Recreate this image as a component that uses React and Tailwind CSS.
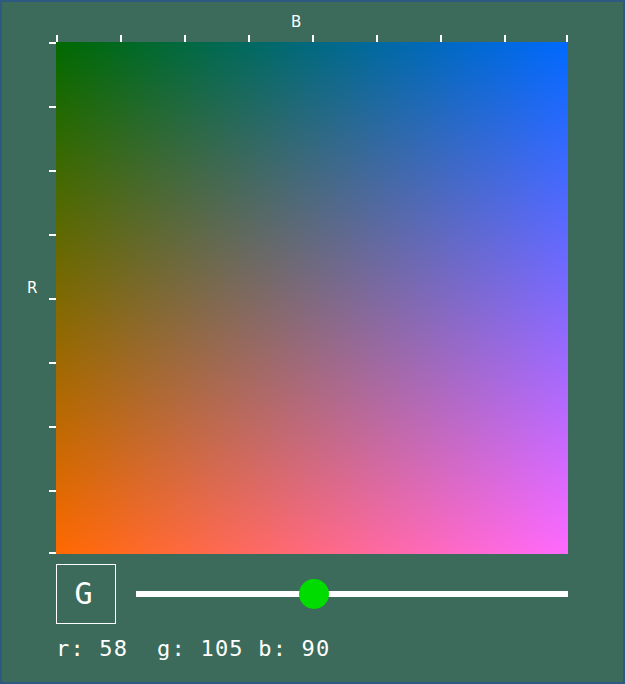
import React from "react";

const TICKS = [0, 1, 2, 3, 4, 5, 6, 7, 8].map((k) => Math.min(k * 64, 510));

const ColorPlane = () => {
  const g = 105;
  const r = 58;
  const b = 90;

  return (
    <div className="w-[625px] h-[684px] border-2 border-[#2e5a82] bg-[#3d6b5b] text-white font-['DejaVu_Sans',sans-serif]">
      {/* ---------- Plane + axes ---------- */}
      <div className="grid grid-cols-[54px_512px] grid-rows-[40px_512px]">
        <div />

        {/* B axis */}
        <div className="flex flex-col">
          <div className="pl-[235px] pt-[12px] text-[15px] leading-[17px]">B</div>
          <svg className="mt-auto overflow-visible" width="512" height="7">
            {TICKS.map((x) => (
              <rect key={x} x={x} y="0" width="2" height="7" fill="#fff" />
            ))}
          </svg>
        </div>

        {/* R axis */}
        <div className="flex">
          <div className="flex-1 pl-[25px] pt-[238px] text-[15px] leading-[17px]">R</div>
          <svg width="7" height="512">
            {TICKS.map((y) => (
              <rect key={y} x="0" y={y} width="7" height="2" fill="#fff" />
            ))}
          </svg>
        </div>

        {/* gradient square: R down, B across, G fixed */}
        <div className="w-[512px] h-[512px] bg-[linear-gradient(to_bottom,#000000,#ff0000),linear-gradient(to_right,#006900,#0069ff)] bg-blend-screen" />
      </div>

      {/* ---------- G slider ---------- */}
      <div className="flex items-center gap-5 pl-[54px] mt-[10px] w-[566px]">
        <div className="w-[60px] h-[60px] border border-white flex items-center justify-center pr-[5px] font-['DejaVu_Sans_Mono',monospace] text-[30px] leading-none">
          G
        </div>
        <div className="relative flex-1 h-[30px] flex items-center mb-[1px]">
          <div className="w-full h-[6px] bg-white" />
          <div
            className="absolute top-0 w-[30px] h-[30px] -translate-x-1/2 rounded-full bg-[#00dc00]"
            style={{ left: `${(g / 255) * 100}%` }}
          />
        </div>
      </div>

      {/* ---------- readout ---------- */}
      <div className="pl-[54px] mt-[13px] whitespace-pre font-['DejaVu_Sans_Mono',monospace] text-[22px] leading-[24px] tracking-[1.2px]">
        {`r: ${String(r).padEnd(3)} g: ${String(g).padEnd(3)} b: ${String(b).padEnd(3)}`}
      </div>
    </div>
  );
};

export default ColorPlane;
